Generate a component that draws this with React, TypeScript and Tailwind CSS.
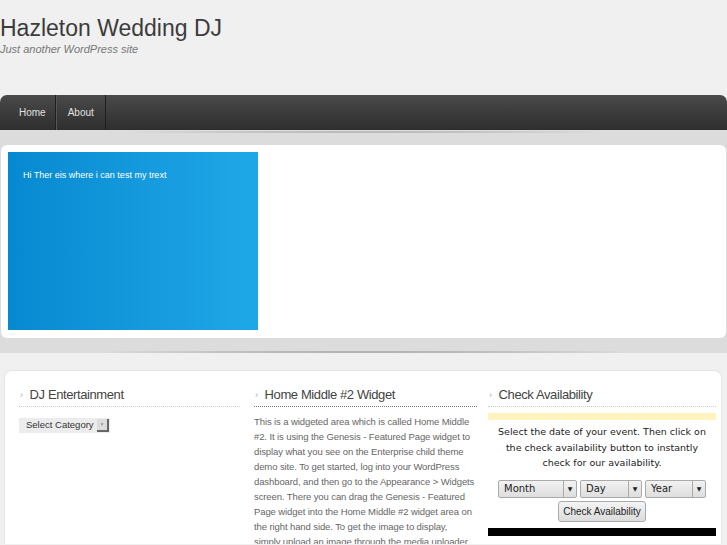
export default function App() {
  return (
    <div className="min-h-[545px] w-[727px] overflow-hidden bg-[#f0f0f0] font-['Liberation_Sans',Arial,sans-serif]">
      <header className="h-[95px] pt-[14px]">
        <h1 className="text-[23px] leading-[28px] text-[#3c3c3c]">Hazleton Wedding DJ</h1>
        <p className="text-[11px] italic leading-[14px] text-[#777]">Just another WordPress site</p>
      </header>

      <nav className="flex h-[35px] rounded-tl-[7px] rounded-tr-[7px] bg-gradient-to-b from-[#4a4a4a] to-[#2e2e2e]">
        <a className="flex items-center border-r border-[#1f1f1f] pl-[19px] pr-[9px] text-[10px] text-[#e0e0e0]">Home</a>
        <a className="flex items-center border-r border-[#1f1f1f] border-l border-l-[#555] pl-[11px] pr-[11px] text-[10px] text-[#e0e0e0]">About</a>
      </nav>

      <div className="bg-[#dcdcdc] pt-[1px]">
        <div className="mx-auto h-[2px] w-[560px] bg-[radial-gradient(ellipse_at_center,#9a9a9a,transparent_70%)]" />
        <div className="h-[12px]" />
        <section className="mx-[1px] flex h-[193px] rounded-[6px] bg-white p-[7px]">
          <div className="h-[178px] w-[250px] bg-gradient-to-r from-[#0689d0] to-[#1fa8e8] px-[15px] pt-[17px]">
            <p className="text-[9px] text-white">Hi Ther eis where i can test my trext</p>
          </div>
        </section>
        <div className="h-[13px]" />
        <div className="mx-auto h-[2px] w-[620px] bg-[radial-gradient(ellipse_at_center,#8a8a8a,transparent_70%)]" />
      </div>

      <div className="h-[17px]" />

      <section className="ml-[4px] mr-[5px] flex h-[174px] overflow-hidden rounded-t-[8px] border border-b-0 border-[#e6e6e6] bg-white pl-[14px] pr-[5px] pt-[16px]">
        <div className="w-[221px] shrink-0">
          <WidgetTitle>DJ Entertainment</WidgetTitle>
          <div className="mt-[11px] flex h-[15px] w-[91px] items-center bg-[#ececec] pl-[7px] text-[9.5px] text-[#333]">
            <span className="flex-1">Select Category</span>
            <span className="mr-[1px] flex h-[13px] w-[12px] items-center justify-center border-r-2 border-b-2 border-[#666] bg-[#ddd] text-[5px] text-[#999]">▼</span>
          </div>
        </div>

        <div className="ml-[14px] w-[223px] shrink-0">
          <WidgetTitle dark>Home Middle #2 Widget</WidgetTitle>
          <p className="mt-[7px] text-[9.5px] leading-[15px] tracking-[-0.1px] text-[#666]">
            This is a widgeted area which is called Home Middle #2. It is using the Genesis - Featured Page widget to display what you see on the Enterprise child theme demo site. To get started, log into your WordPress dashboard, and then go to the Appearance &gt; Widgets screen. There you can drag the Genesis - Featured Page widget into the Home Middle #2 widget area on the right hand side. To get the image to display,
            <br />
            simply upload an image through the media uploader
          </p>
        </div>

        <div className="ml-[11px] w-[228px] shrink-0">
          <WidgetTitle>Check Availability</WidgetTitle>
          <div className="mt-[6px] h-[7px] bg-[#fff3c0]" />
          <p className="mt-[4px] px-[8px] text-center font-['DejaVu_Sans',sans-serif] text-[9.5px] leading-[15.5px] text-[#222]">
            Select the date of your event. Then click on the check availability button to instantly check for our availability.
          </p>
          <div className="mt-[9px] flex justify-center gap-[3px] font-['DejaVu_Sans',sans-serif] text-[10px] text-[#222]">
            <Select label="Month" w="w-[79px]" />
            <Select label="Day" w="w-[62px]" />
            <Select label="Year" w="w-[61px]" />
          </div>
          <div className="mt-[3px] flex justify-center">
            <button className="h-[21px] w-[88px] whitespace-nowrap rounded-[3px] border border-[#aaa] bg-gradient-to-b from-[#f4f4f4] to-[#dcdcdc] px-0 text-[10px] text-[#222]">
              Check Availability
            </button>
          </div>
          <div className="mt-[6px] h-[8px] bg-black" />
        </div>
      </section>
    </div>
  );
}

function WidgetTitle({ children, dark }: { children: React.ReactNode; dark?: boolean }) {
  return (
    <h4
      className={`flex items-center gap-[7px] border-b border-dotted pb-[3px] pl-[1px] text-[13px] leading-[16px] tracking-[-0.4px] text-[#444] ${
        dark ? "border-[#777]" : "border-[#ccc]"
      }`}
    >
      <span className="text-[9px] text-[#aaa]">›</span>
      {children}
    </h4>
  );
}

function Select({ label, w }: { label: string; w: string }) {
  return (
    <div className={`flex h-[18px] ${w} items-center rounded-[2px] border border-[#aaa] bg-gradient-to-b from-[#f2f2f2] to-[#dedede]`}>
      <span className="flex-1 pl-[5px]">{label}</span>
      <span className="flex h-full w-[13px] items-center justify-center border-l border-[#aaa] text-[6px]">▼</span>
    </div>
  );
}
